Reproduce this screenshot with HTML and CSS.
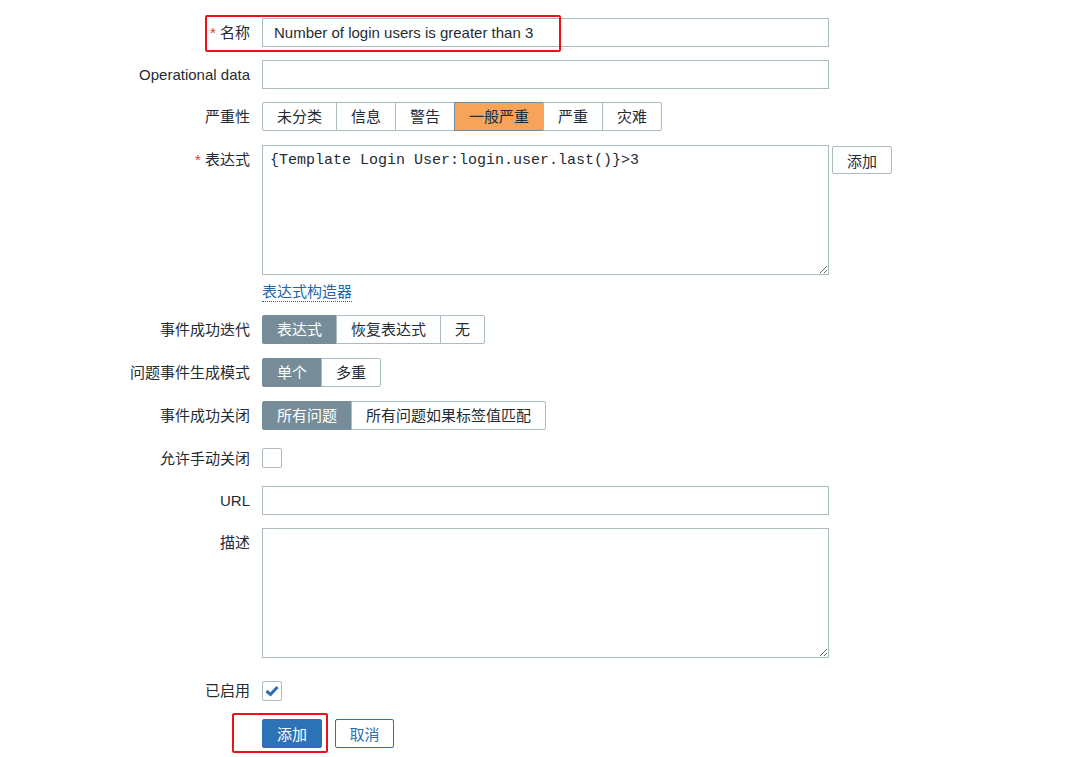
FILE: index.html
```html
<!DOCTYPE html>
<html lang="zh-CN">
<head>
  <meta charset="UTF-8" />
  <meta name="viewport" content="width=device-width, initial-scale=1.0"/>
  <title>触发器</title>
  <link rel="stylesheet" href="styles.css">
</head>
<body>
  <form class="form">
    <div class="label"><span class="req">*</span> 名称</div>
    <div class="field"><input class="text" type="text" value="Number of login users is greater than 3"></div>

    <div class="label">Operational data</div>
    <div class="field"><input class="text" type="text"></div>

    <div class="label">严重性</div>
    <div class="field seg-row">
      <div class="seg">
        <span>未分类</span><span>信息</span><span>警告</span><span class="on-orange">一般严重</span><span>严重</span><span>灾难</span>
      </div>
    </div>

    <div class="label"><span class="req">*</span> 表达式</div>
    <div class="field">
      <div class="expr">
        <textarea class="area mono">{Template Login User:login.user.last()}>3</textarea>
        <button type="button" class="btn-alt">添加</button>
      </div>
      <a class="link" href="#">表达式构造器</a>
    </div>

    <div class="label">事件成功迭代</div>
    <div class="field seg-row">
      <div class="seg">
        <span class="on">表达式</span><span>恢复表达式</span><span>无</span>
      </div>
    </div>

    <div class="label">问题事件生成模式</div>
    <div class="field seg-row">
      <div class="seg">
        <span class="on">单个</span><span>多重</span>
      </div>
    </div>

    <div class="label">事件成功关闭</div>
    <div class="field seg-row">
      <div class="seg">
        <span class="on">所有问题</span><span>所有问题如果标签值匹配</span>
      </div>
    </div>

    <div class="label">允许手动关闭</div>
    <div class="field check-row"><span class="check"></span></div>

    <div class="label">URL</div>
    <div class="field"><input class="text" type="text"></div>

    <div class="label">描述</div>
    <div class="field"><textarea class="area"></textarea></div>

    <div class="label enabled">已启用</div>
    <div class="field check-row enabled">
      <span class="check">
        <svg width="18" height="18" viewBox="0 0 18 18"><polyline points="3.5,9 7.5,12.5 14.5,5" fill="none" stroke="#2b6cb3" stroke-width="3"/></svg>
      </span>
    </div>

    <div></div>
    <div class="field actions">
      <button type="button" class="btn-main">添加</button>
      <button type="button" class="btn-cancel">取消</button>
    </div>

    <div class="mark mark-name"></div>
    <div class="mark mark-add"></div>
  </form>
</body>
</html>
```

FILE: styles.css
```css
body {
  margin: 0;
  font-family: "Liberation Sans", "Noto Sans CJK SC", sans-serif;
  font-size: 15px;
  color: #1f2c33;
  background: #fff;
}
.form {
  position: relative;
  display: grid;
  grid-template-columns: 250px 567px;
  column-gap: 12px;
  row-gap: 13px;
  padding-top: 18px;
  padding-bottom: 20px;
}
.label {
  text-align: right;
  line-height: 29px;
  white-space: nowrap;
}
.req {
  color: #e33734;
}
.text {
  box-sizing: border-box;
  width: 567px;
  height: 29px;
  border: 1px solid #acbbc2;
  padding: 0 11px;
  font-family: inherit;
  font-size: 15px;
  color: #1f2c33;
  outline: none;
}
.area {
  box-sizing: border-box;
  width: 567px;
  height: 130px;
  border: 1px solid #acbbc2;
  padding: 5px 7px;
  margin: 0;
  display: block;
  font-family: inherit;
  font-size: 15px;
  color: #1f2c33;
  resize: both;
  outline: none;
}
.mono {
  font-family: "Liberation Mono", monospace;
  font-size: 15px;
  line-height: 19px;
}
.seg-row {
  padding-bottom: 1px;
}
.seg {
  display: flex;
}
.seg span {
  box-sizing: border-box;
  height: 29px;
  line-height: 27px;
  padding: 0 14px;
  border: 1px solid #acbbc2;
  margin-left: -1px;
  background: #fff;
  white-space: nowrap;
}
.seg span:first-child {
  margin-left: 0;
  border-radius: 2px 0 0 2px;
}
.seg span:last-child {
  border-radius: 0 2px 2px 0;
}
.seg .on {
  background: #768d99;
  border-color: #768d99;
  color: #fff;
}
.seg .on-orange {
  background: #f8a35a;
  border-color: #768d99;
}
.expr {
  display: flex;
  align-items: flex-start;
  gap: 3px;
  width: 630px;
}
.btn-alt {
  margin-top: 1px;
  width: 60px;
  height: 28px;
  background: #fff;
  border: 1px solid #acbbc2;
  border-radius: 2px;
  font-family: inherit;
  font-size: 15px;
  color: #1f2c33;
}
.link {
  display: inline-block;
  margin-top: 8px;
  line-height: 18px;
  color: #1f65b0;
  text-decoration: none;
  border-bottom: 1px dotted #1f65b0;
}
.check-row {
  display: flex;
  align-items: center;
  height: 29px;
  margin-top: -1px;
}
.check {
  box-sizing: border-box;
  width: 20px;
  height: 20px;
  border: 1px solid #acbbc2;
  border-radius: 2px;
  display: flex;
  align-items: center;
  justify-content: center;
}
.enabled,
.check-row.enabled {
  margin-top: 5px;
}
.actions {
  display: flex;
  gap: 13px;
  margin-top: 1px;
}
.btn-main {
  width: 60px;
  height: 29px;
  background: #2b72b6;
  border: 1px solid #2b72b6;
  border-radius: 2px;
  color: #fff;
  font-family: inherit;
  font-size: 15px;
}
.btn-cancel {
  width: 59px;
  height: 29px;
  background: #fff;
  border: 1px solid #2b72b6;
  border-radius: 2px;
  color: #2b72b6;
  font-family: inherit;
  font-size: 15px;
}
.mark {
  position: absolute;
  box-sizing: border-box;
  border: 2px solid #e8131d;
  border-radius: 2px;
}
.mark-name {
  left: 205px;
  top: 15px;
  width: 356px;
  height: 37px;
}
.mark-add {
  left: 232px;
  top: 713px;
  width: 96px;
  height: 40px;
}
```
